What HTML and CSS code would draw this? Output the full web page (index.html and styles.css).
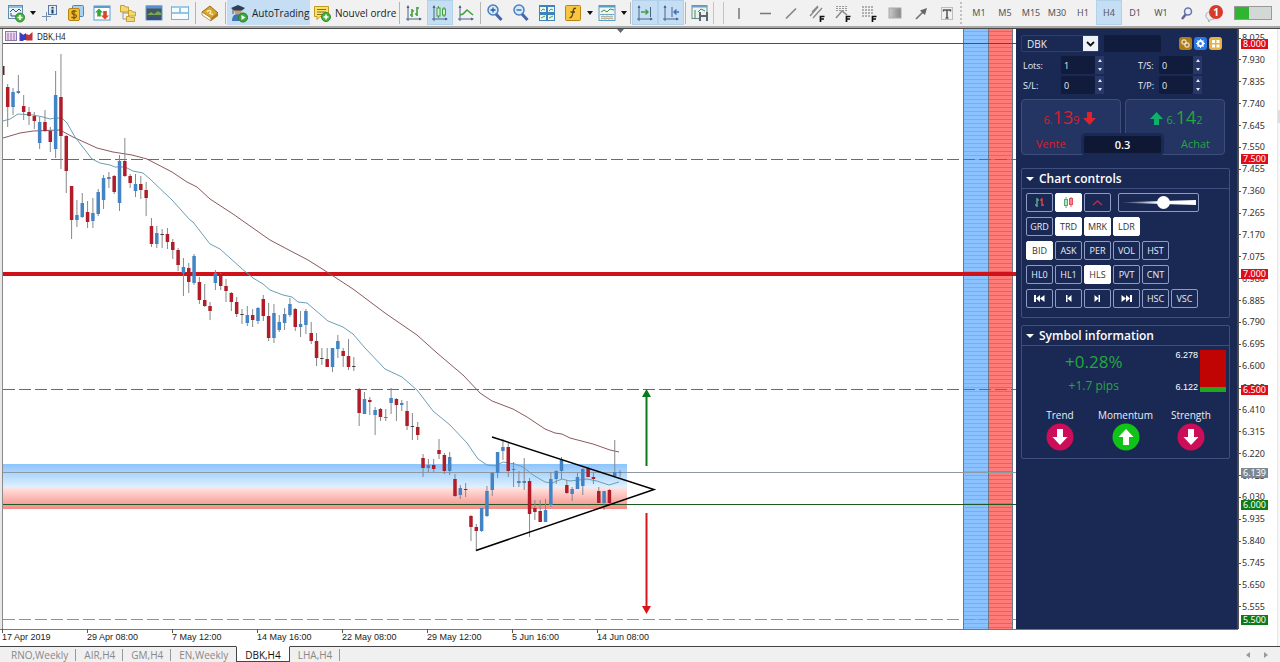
FILE: index.html
```html
<!DOCTYPE html>
<html lang="fr">
<head>
<meta charset="utf-8">
<title>DBK,H4</title>
<link rel="stylesheet" href="styles.css">
</head>
<body>
<div class="app">
<header class="toolbar">
  <button class="tool" aria-label="New chart"><svg width="20" height="20" viewBox="0 0 20 20"><rect x="2.5" y="2.5" width="14" height="13" fill="#e9f5fb" stroke="#5b8fb0"/><path d="M3 4h13" stroke="#8fc0dc" stroke-width="2"/><path d="M4 9l3-3 3 3 3-3 2 2M5 13v-3M5 13h6" stroke="#447" fill="none"/><circle cx="14" cy="14.500" r="4.500" fill="#4bb043" stroke="#2c8a2c"/><path d="M14 12v5M11.500 14.500h5" stroke="#fff" stroke-width="1.600"/></svg></button>
  <button class="caret" aria-label="New chart menu"></button>
  <button class="tool" aria-label="Market watch"><svg width="20" height="20" viewBox="0 0 20 20"><rect x="8.500" y="2.500" width="8" height="9" fill="#dfeaf5" stroke="#5a7ba5"/><path d="M12.500 4v1.500M12.500 6.500v4" stroke="#235" stroke-width="2"/><path d="M6.500 9v9M2 13.500h9" stroke="#7a8fa8"/></svg></button>
  <button class="tool" aria-label="Symbols"><svg width="20" height="20" viewBox="0 0 20 20"><rect x="6.500" y="2.500" width="11" height="11" rx="1" fill="#a8d2f2" stroke="#4a86bb"/><rect x="2.500" y="5.500" width="11" height="12" rx="1.500" fill="#f1bf35" stroke="#b98410"/><path d="M10.500 8.500c-2-1.500-5-.5-4.500 1.500s4.500 1 4.500 3-3 2.500-5 1M8 7v9.500" stroke="#7b5200" fill="none" stroke-width="1.200"/></svg></button>
  <button class="tool" aria-label="Data window"><svg width="20" height="20" viewBox="0 0 20 20"><rect x="2" y="3" width="16" height="14" fill="#fff" stroke="#5a9bd0"/><path d="M2 4h16" stroke="#5a9bd0" stroke-width="2"/><path d="M7 5.500l4 4H8.800v4H5.200v-4H3z" fill="#39a53a"/><path d="M13 16.500l-4-4h2.200V8h3.600v4.500H17z" fill="#e0432c"/></svg></button>
  <button class="tool" aria-label="Navigator"><svg width="20" height="20" viewBox="0 0 20 20"><path d="M5 8v8h6M5 10h6" stroke="#999" fill="none"/><path d="M2.500 2.500h4l1 1.500h3v5h-8zM10.500 7.500h3l1 1.500h3v4h-7zM8.500 13.500h3l1 1h4v4h-8z" fill="#f3d873" stroke="#c5a02c"/></svg></button>
  <button class="tool" aria-label="Terminal"><svg width="20" height="20" viewBox="0 0 20 20"><rect x="2" y="3" width="16" height="14" fill="#44565e" stroke="#6aa0cf"/><path d="M2 4h16" stroke="#5a93cc" stroke-width="3"/><path d="M3 12l4-3 3 2 4-3 3 2v2H3z" fill="#75a657"/><path d="M3 14h14v3H3z" fill="#384e8c"/></svg></button>
  <button class="tool" aria-label="Strategy tester"><svg width="20" height="20" viewBox="0 0 20 20"><rect x="1.500" y="3.500" width="17" height="13" fill="#f7fcff" stroke="#79b2d8"/><path d="M2 10h16M10 4v6" stroke="#79b2d8" stroke-width="1.500"/><path d="M2 4h16" stroke="#9acbea" stroke-width="2"/></svg></button>
  <span class="sep"></span>
  <button class="tool" aria-label="MetaEditor"><svg width="20" height="20" viewBox="0 0 20 20"><path d="M2 9l8-6 8 7-7 6z" fill="#d9a62b" stroke="#9a6d10"/><path d="M2 9l9 6v3l-9-6z" fill="#fff" stroke="#9a6d10" stroke-width=".7"/><path d="M11 15l7-5v3l-7 5z" fill="#b17d16"/><path d="M7 9c2-3 5-1 3 1.500l3 1" stroke="#f9eab0" stroke-width="1.500" fill="none"/></svg></button>
  <span class="sep"></span>
  <button class="wide on auto"><svg width="20" height="20" viewBox="0 0 20 20"><path d="M3 18c0-6 3-7 6-7s6 2 6 7z" fill="#4276b8"/><circle cx="9" cy="8" r="3.500" fill="#c79a70"/><path d="M2 5l7-3 7 3-3 2.500H5z" fill="#2e4056"/><path d="M4 6v5" stroke="#555"/><circle cx="14" cy="14.500" r="4.500" fill="#3fa83c" stroke="#267c25"/><path d="M12.500 12l4 2.500-4 2.500z" fill="#fff"/></svg>AutoTrading</button>
  <button class="wide order"><svg width="20" height="20" viewBox="0 0 20 20"><path d="M2.500 3.500h14v10H8l-3 3v-3H2.500z" fill="#f9e06a" stroke="#c29a20"/><path d="M5 6.500h9M5 9h9M5 11.500h6" stroke="#8a7320"/><circle cx="14" cy="14" r="4.500" fill="#4bb043" stroke="#2c8a2c"/><path d="M14 11.500v5M11.500 14h5" stroke="#fff" stroke-width="1.600"/></svg>Nouvel ordre</button>
  <span class="sep"></span>
  <button class="tool" aria-label="Bar chart"><svg width="20" height="20" viewBox="0 0 20 20"><path d="M4 3v15M2 16h15" stroke="#4a6390" fill="none"/><path d="M2.500 5L4 2l1.500 3zM15 14.500l3 1.500-3 1.500z" fill="#4a6390"/><path d="M8 6v8M6 12h2M8 8h2M13 4v9M11 11h2M13 5h2" stroke="#3fa23a" stroke-width="1.600"/></svg></button>
  <button class="tool on" aria-label="Candlesticks"><svg width="20" height="20" viewBox="0 0 20 20"><path d="M4 3v15M2 16h15" stroke="#4a6390" fill="none"/><path d="M2.500 5L4 2l1.500 3zM15 14.500l3 1.500-3 1.500z" fill="#4a6390"/><rect x="7" y="5" width="3" height="8" fill="#d7f0cf" stroke="#3fa23a"/><rect x="12.500" y="6" width="3" height="6" fill="#d7f0cf" stroke="#3fa23a"/><path d="M8.500 3v2M8.500 13v2M14 4v2M14 12v2" stroke="#3fa23a"/></svg></button>
  <button class="tool" aria-label="Line chart"><svg width="20" height="20" viewBox="0 0 20 20"><path d="M4 3v15M2 16h15" stroke="#4a6390" fill="none"/><path d="M2.500 5L4 2l1.500 3zM15 14.500l3 1.500-3 1.500z" fill="#4a6390"/><path d="M4 12l3-1 4-4 6 5" stroke="#3fa23a" stroke-width="1.600" fill="none"/></svg></button>
  <span class="sep thin"></span>
  <button class="tool" aria-label="Zoom in"><svg width="20" height="20" viewBox="0 0 20 20"><path d="M10.500 10.500l6 6.500" stroke="#4566a8" stroke-width="3"/><circle cx="8" cy="7" r="5" fill="#d6eafa" stroke="#4a7fc0" stroke-width="1.500"/><path d="M8 4.500v5M5.500 7h5" stroke="#2a5a9c" stroke-width="1.300"/></svg></button>
  <button class="tool" aria-label="Zoom out"><svg width="20" height="20" viewBox="0 0 20 20"><path d="M10.500 10.500l6 6.500" stroke="#4566a8" stroke-width="3"/><circle cx="8" cy="7" r="5" fill="#d6eafa" stroke="#4a7fc0" stroke-width="1.500"/><path d="M5.500 7h5" stroke="#2a5a9c" stroke-width="1.300"/></svg></button>
  <button class="tool" aria-label="Tile windows"><svg width="20" height="20" viewBox="0 0 20 20"><rect x="2" y="2" width="16" height="16" fill="#3d83bd"/><path d="M3 4h6v5H3zM11 4h6v5h-6zM3 12h6v5H3zM11 12h6v5h-6z" fill="#eef8e8"/><path d="M4 8l2-2 2 1M12 8l2-2 2 1M4 15l2-1 2-1M12 15l2-1 2-1" stroke="#4c9e43" fill="none"/></svg></button>
  <button class="tool" aria-label="Indicators"><svg width="20" height="20" viewBox="0 0 20 20"><rect x="2.500" y="2.500" width="15" height="15" rx="1" fill="#f8c540" stroke="#bb8510"/><path d="M13 5.500c-2.500-1-2.500 1-3 4S8.500 15 6.500 14.500M7.500 9h4.500" stroke="#5d4208" stroke-width="1.300" fill="none"/></svg></button>
  <button class="caret" aria-label="Indicators menu"></button>
  <button class="tool" aria-label="Templates"><svg width="20" height="20" viewBox="0 0 20 20"><rect x="2" y="2.500" width="16" height="15" fill="#eef6f8" stroke="#5c9dc8"/><path d="M2 3.500h16" stroke="#5c9dc8" stroke-width="2"/><path d="M4 9l3-2 3 2 3-3 4 1" stroke="#3d963a" fill="none"/><path d="M3 11.500h14" stroke="#78a4bc"/><path d="M4 14l2-1 2 1 2-1 2 1 2-1 2 1M4 16l2-1 2 1 2-1 2 1 2-1 2 1" stroke="#a39c80" fill="none"/></svg></button>
  <button class="caret" aria-label="Templates menu"></button>
  <span class="sep"></span>
  <button class="tool on" aria-label="Auto scroll"><svg width="20" height="20" viewBox="0 0 20 20"><path d="M4 3v15M2 16h15M15.500 4v10" stroke="#4a6390" fill="none"/><path d="M2.500 5L4 2l1.500 3zM15 14.500l3 1.500-3 1.500z" fill="#4a6390"/><path d="M6 9h7M10.500 6.500L13 9l-2.500 2.500" stroke="#3fa23a" stroke-width="1.400" fill="none"/></svg></button>
  <button class="tool on" aria-label="Chart shift"><svg width="20" height="20" viewBox="0 0 20 20"><path d="M4 3v15M2 16h15M11 4v10" stroke="#4a6390" fill="none"/><path d="M2.500 5L4 2l1.500 3zM15 14.500l3 1.500-3 1.500z" fill="#4a6390"/><path d="M13 9h5M15.500 6.500L13 9l2.500 2.500" stroke="#3e6fb8" stroke-width="1.400" fill="none"/></svg></button>
  <span class="sep thin"></span>
  <button class="tool" aria-label="Save picture"><svg width="20" height="20" viewBox="0 0 20 20"><rect x="2" y="2.500" width="15" height="13" fill="#eaf3f3" stroke="#71869a"/><path d="M2 3.500h15" stroke="#71a0c4" stroke-width="2"/><path d="M5 7v9M8 9l3-3 4 2" stroke="#3d963a" fill="none"/><path d="M9 9h9v9H9z" fill="#5c666e"/><path d="M11 9h5v3h-5zM11 14h5v4h-5z" fill="#eee"/></svg></button>
  <span class="sep double"></span>
  <button class="tool" aria-label="Vertical line"><svg width="20" height="20" viewBox="0 0 20 20"><path d="M10 5v11" stroke="#777" stroke-width="1.500"/></svg></button>
  <button class="tool" aria-label="Horizontal line"><svg width="20" height="20" viewBox="0 0 20 20"><path d="M5 10.500h11" stroke="#777" stroke-width="1.500"/></svg></button>
  <button class="tool" aria-label="Trend line"><svg width="20" height="20" viewBox="0 0 20 20"><path d="M5 15.500L15 5.500" stroke="#888" stroke-width="1.700"/></svg></button>
  <button class="tool" aria-label="Channel"><svg width="20" height="20" viewBox="0 0 20 20"><path d="M3 13l8-9M6 15L15 5M5 9l6-6" stroke="#888" stroke-width="1.300"/><path d="M13.500 19v-5.500h4M13.500 16h3.500" stroke="#111" stroke-width="1.700" fill="none"/></svg></button>
  <button class="tool" aria-label="Fibonacci fan"><svg width="20" height="20" viewBox="0 0 20 20"><path d="M3 3.500h12M3 5.500h12M3 7.500h12" stroke="#999" stroke-dasharray="2 1"/><path d="M3 15l6-7 5 4" stroke="#888" stroke-width="1.500" fill="none"/><path d="M13.500 19v-5.500h4M13.500 16h3.500" stroke="#111" stroke-width="1.700" fill="none"/></svg></button>
  <button class="tool" aria-label="Fibonacci retracement"><svg width="20" height="20" viewBox="0 0 20 20"><path d="M3 4h12M3 7h12M3 10h12M3 13h8" stroke="#999" stroke-width="1.500" stroke-dasharray="2 1"/><path d="M13.500 19v-5.500h4M13.500 16h3.500" stroke="#111" stroke-width="1.700" fill="none"/></svg></button>
  <button class="tool" aria-label="Shapes"><svg width="20" height="20" viewBox="0 0 20 20"><defs><linearGradient id="gs"><stop offset="0" stop-color="#ccc"/><stop offset="1" stop-color="#858585"/></linearGradient></defs><rect x="4" y="5" width="12" height="10" fill="url(#gs)" stroke="#aaa"/></svg></button>
  <button class="tool" aria-label="Arrow"><svg width="20" height="20" viewBox="0 0 20 20"><path d="M5 16l7-7" stroke="#777" stroke-width="1.700"/><path d="M16 5l-2 7-2.500-2L9 7.500z" fill="#666"/></svg></button>
  <button class="tool" aria-label="Text label"><svg width="20" height="20" viewBox="0 0 20 20"><rect x="4.500" y="4.500" width="11" height="12" fill="none" stroke="#888" stroke-dasharray="1 1"/><path d="M6.500 8.500V7h7v1.500M10 7v8M8.500 15h3" stroke="#555" stroke-width="1.500" fill="none"/></svg></button>
  <span class="sep dotted"></span>
  <button class="tool">M1</button>
  <button class="tool">M5</button>
  <button class="tool">M15</button>
  <button class="tool">M30</button>
  <button class="tool">H1</button>
  <button class="tool on">H4</button>
  <button class="tool">D1</button>
  <button class="tool">W1</button>
  <button class="tool" aria-label="Search"><svg width="20" height="20" viewBox="0 0 20 20"><path d="M9 11l-4 5" stroke="#5b6796" stroke-width="2.500"/><circle cx="11" cy="8.500" r="3.500" fill="#eef" stroke="#6874a8" stroke-width="1.500"/></svg></button>
  <button class="bell" aria-label="Notifications"><svg width="20" height="20" viewBox="0 0 20 20"><path d="M3 12c0-3 4-4 8-3v7c-3 1-4 0-5 3l-1-3c-2-1-2-2-2-4z" fill="#eee" stroke="#aaa"/></svg><span class="count">1</span></button>
  <span class="meter"></span>
</header>

<main class="workspace">
  <svg class="plot" id="plot">
    <defs>
      <linearGradient id="demand" x2="0" y2="1"><stop offset="0" stop-color="#8cc4fd"/><stop offset=".5" stop-color="#dcefff"/><stop offset=".53" stop-color="#ffe3e1"/><stop offset="1" stop-color="#f78a84"/></linearGradient>
      <pattern id="bidfill" width="8" height="4" patternUnits="userSpaceOnUse"><path d="M0 0h8v4H0z" fill="#8ac3ff"/><path d="M0 3h8v1H0z" fill="#72b0f4"/></pattern>
      <pattern id="askfill" width="8" height="4" patternUnits="userSpaceOnUse"><path d="M0 0h8v4H0z" fill="#ff7b78"/><path d="M0 3h8v1H0z" fill="#e8605f"/></pattern>
    </defs>
    <g transform="translate(0 -29)">
      <rect x="3" y="464" width="624" height="45" fill="url(#demand)"/>
      <svg x="100%" overflow="visible">
        <rect x="-52" y="29" width="25" height="2000" fill="url(#bidfill)"/>
        <rect x="-28" y="29" width="25" height="2000" fill="url(#askfill)"/>
        <path d="M-52.500 29v2000M-27.500 29v2000M-3.500 29v2000" stroke="#6f7786"/>
      </svg>
      <line class="level alert" x1="3" x2="100%" y1="43.500" y2="43.500"/>
      <line class="level dash" x1="3" x2="100%" y1="159.500" y2="159.500"/>
      <line class="level major" x1="3" x2="100%" y1="274" y2="274"/>
      <line class="level dash" x1="3" x2="100%" y1="389.500" y2="389.500"/>
      <line class="level bid" x1="3" x2="100%" y1="472.500" y2="472.500"/>
      <line class="level target" x1="3" x2="100%" y1="504.500" y2="504.500"/>
      <line class="level dash low" x1="3" x2="100%" y1="619.500" y2="619.500"/>
      <polyline class="ma slow" points="3,138 20,133 33,131 60,130 73,137 97,148 113,152 132,155 147,159 172,172 187,182 197,187 210,199 233,214 260,233 270,240 287,249 308,260 327,272 353,289 385,313 417,335 437,353 463,375 480,393 492,401 513,409 527,417 545,429 555,433 562,434 570,438 593,444 610,450 619,452"/>
      <polyline class="ma fast" points="3,121 10,119 18,114 33,115 43,117 50,119 55,118 62,118 67,123 75,137 92,159 100,163 110,165 115,167 125,167 133,171 143,173 150,179 172,200 190,220 193,222 210,244 220,249 240,267 253,278 263,284 270,290 283,295 292,297 298,302 307,303 328,321 343,327 353,334 365,348 385,369 402,377 417,390 433,411 450,425 467,443 478,459 487,465 495,466 503,462 515,464 523,467 533,475 545,482 552,483 562,479 570,481 587,479 597,481 609,485 619,482"/>
      <path d="M3.500 66v9" stroke="#6b1a22" stroke-width="2"/>
      <g id="candles"></g>
      <path class="wedge" d="M492 437L654 489.500L476 550.500"/>
      <path d="M646.500 466V396" stroke="#0b7a1a" stroke-width="2"/><path d="M642 397h9l-4.500-8z" fill="#0b7a1a"/>
      <path d="M646.500 513v96" stroke="#d8141c" stroke-width="2"/><path d="M642 606h9l-4.500 8z" fill="#d8141c"/>
      <path d="M617 29h7l-3.500 4z" fill="#667"/>
      <rect x="5.500" y="31.500" width="11" height="9" fill="#e4d8f2" stroke="#8a78b0"/><path d="M8 33v7M11 33v7M14 33v7" stroke="#b06a9a"/>
      <path d="M19.500 32l4 3v6h-4zM23 35l3-2v7h-3z" fill="#3a3ec0"/><path d="M26 34l3 1 3.500-3v8.500h-6.500z" fill="#c0353b"/>
      <text class="title" x="37" y="40">DBK,H4</text>
      <path d="M2.500 29v2000" stroke="#8a8a8a"/><path d="M0 29h2v2000h-2z" fill="#e8e8e8"/>
    </g>
  </svg>

  <aside class="panel">
    <div class="row symbol">
      <span class="pick"><select aria-label="Symbol"><option>DBK</option></select><svg width="15" height="15" viewBox="0 0 15 15"><path d="M0 0h15v15H0z" fill="#eef1f8"/><path d="M4 6l3.500 3.500L11 6" fill="none" stroke="#111" stroke-width="1.800"/></svg></span>
      <input class="search" type="text" aria-label="Filter">
      <button class="mini brown" aria-label="Link"><svg width="13" height="13" viewBox="0 0 13 13"><rect x="3" y="3" width="4" height="4" rx="1" fill="none" stroke="#fff"/><rect x="6" y="6" width="4" height="4" rx="1" fill="none" stroke="#fff"/></svg></button>
      <button class="mini blue" aria-label="Settings"><svg width="13" height="13" viewBox="0 0 13 13"><circle cx="6.500" cy="6.500" r="2.500" fill="none" stroke="#fff" stroke-width="2"/><path d="M6.500 2v9M2 6.500h9M3.500 3.500l6 6M9.500 3.500l-6 6" stroke="#fff"/><circle cx="6.500" cy="6.500" r="1.500" fill="#2f78df"/></svg></button>
      <button class="mini gold" aria-label="Layout"><svg width="13" height="13" viewBox="0 0 13 13"><path d="M3 3h3v3H3zM7.500 3h3v3h-3zM3 7.500h3v3H3zM7.500 7.500h3v3h-3z" fill="#fff"/></svg></button>
    </div>
    <div class="params">
      <label for="lots">Lots:</label><span class="spin"><input id="lots" type="text" value="1"><span class="steps"><button aria-label="Lots up"></button><button class="down" aria-label="Lots down"></button></span></span>
      <label for="ts">T/S:</label><span class="spin"><input id="ts" type="text" value="0"><span class="steps"><button aria-label="T/S up"></button><button class="down" aria-label="T/S down"></button></span></span>
      <label for="sl">S/L:</label><span class="spin"><input id="sl" type="text" value="0"><span class="steps"><button aria-label="S/L up"></button><button class="down" aria-label="S/L down"></button></span></span>
      <label for="tp">T/P:</label><span class="spin"><input id="tp" type="text" value="0"><span class="steps"><button aria-label="T/P up"></button><button class="down" aria-label="T/P down"></button></span></span>
    </div>
    <div class="deal">
      <button class="side sell"><span class="quote">6.<b>13</b>9<svg width="13" height="14" viewBox="0 0 13 14"><path d="M4 0h5v6h4L6.500 13 0 6h4z" fill="#e0222c"/></svg></span><span class="verb">Vente</span></button>
      <button class="side buy"><span class="quote"><svg width="13" height="14" viewBox="0 0 13 14"><path d="M4 13h5V7h4L6.500 0 0 7h4z" fill="#0fb06a"/></svg>6.<b>14</b>2</span><span class="verb">Achat</span></button>
      <input class="spread" type="text" value="0.3" aria-label="Spread">
    </div>
    <details class="box controls" open>
      <summary>Chart controls</summary>
      <div class="keys">
        <div class="keyrow">
          <button class="key" aria-label="Bars"><svg width="13" height="11" viewBox="0 0 13 11"><path d="M4 1v9M2 8h2M4 3h2" stroke="#5aa88c" stroke-width="1.500"/><path d="M9 1v8M7 3h2M9 8h2" stroke="#d0424c" stroke-width="1.500"/></svg></button>
          <button class="key on" aria-label="Candles"><svg width="13" height="11" viewBox="0 0 13 11"><path d="M4 0v11" stroke="#5aa874"/><path d="M9 0v10" stroke="#e0505a"/><rect x="2.500" y="2.500" width="3" height="6" fill="#b9e0c2" stroke="#5aa874"/><rect x="7.500" y="1.500" width="3" height="6" fill="#f08a90" stroke="#e0505a"/></svg></button>
          <button class="key" aria-label="Line"><svg width="13" height="11" viewBox="0 0 13 11"><path d="M2 8l4.500-4L11 8" fill="none" stroke="#b52c48" stroke-width="1.600"/></svg></button>
          <span class="slide"><input type="range" min="0" max="100" value="58" aria-label="Zoom"></span>
        </div>
        <div class="keyrow"><button class="key">GRD</button><button class="key on">TRD</button><button class="key on">MRK</button><button class="key on">LDR</button></div>
        <div class="keyrow"><button class="key on">BID</button><button class="key">ASK</button><button class="key">PER</button><button class="key">VOL</button><button class="key">HST</button></div>
        <div class="keyrow"><button class="key">HL0</button><button class="key">HL1</button><button class="key on">HLS</button><button class="key">PVT</button><button class="key">CNT</button></div>
        <div class="keyrow">
          <button class="key" aria-label="First"><svg width="11" height="9" viewBox="0 0 11 9"><path d="M0 1h2v7H0zM6 1v7L2 4.500zM10.500 1v7L6 4.500z" fill="#fff"/></svg></button>
          <button class="key" aria-label="Previous"><svg width="11" height="9" viewBox="0 0 11 9"><path d="M3 1h1.500v7H3zM8.500 1v7l-4-3.500z" fill="#fff"/></svg></button>
          <button class="key" aria-label="Next"><svg width="11" height="9" viewBox="0 0 11 9"><path d="M8 1H6.500v7H8zM2.500 1v7l4-3.500z" fill="#fff"/></svg></button>
          <button class="key" aria-label="Last"><svg width="11" height="9" viewBox="0 0 11 9"><path d="M11 1H9v7h2zM5 1v7l4-3.500zM.5 1v7L5 4.500z" fill="#fff"/></svg></button>
          <button class="key">HSC</button><button class="key">VSC</button>
        </div>
      </div>
    </details>
    <details class="box info" open>
      <summary>Symbol information</summary>
      <div class="stats">
        <div class="change"><span class="percent">+0.28%</span><span class="pips">+1.7 pips</span></div>
        <div class="range"><span>6.278</span><span>6.122</span></div>
        <div class="gauge"></div>
      </div>
      <div class="signals">
        <div>Trend<svg width="28" height="28" viewBox="0 0 28 28"><circle cx="14" cy="14" r="13.500" fill="#cc0d57"/><path d="M11 6h6v8h4.500L14 22l-7.500-8H11z" fill="#fff"/></svg></div>
        <div>Momentum<svg width="28" height="28" viewBox="0 0 28 28"><circle cx="14" cy="14" r="13.500" fill="#10c316"/><path d="M11 22h6v-8h4.500L14 6l-7.500 8H11z" fill="#fff"/></svg></div>
        <div>Strength<svg width="28" height="28" viewBox="0 0 28 28"><circle cx="14" cy="14" r="13.500" fill="#cc0d57"/><path d="M11 6h6v8h4.500L14 22l-7.500-8H11z" fill="#fff"/></svg></div>
      </div>
    </details>
  </aside>

  <div class="scale"><ul id="scale"></ul></div>
  <div class="times"><span>17 Apr 2019</span><span>29 Apr 08:00</span><span>7 May 12:00</span><span>14 May 16:00</span><span>22 May 08:00</span><span>29 May 12:00</span><span>5 Jun 16:00</span><span>14 Jun 08:00</span></div>
  <div class="edge"></div>
</main>

<nav class="tabs">
  <button class="tab">RNO,Weekly</button><button class="tab">AIR,H4</button><button class="tab">GM,H4</button><button class="tab last">EN,Weekly</button><button class="tab current">DBK,H4</button><button class="tab">LHA,H4</button>
  <span class="arrows"><button class="arrow back" aria-label="Scroll left"></button><button class="arrow" aria-label="Scroll right"></button></span>
</nav>
</div>
<script src="chart.js"></script>
</body>
</html>
```

FILE: styles.css
```css
* { box-sizing: border-box; }
body { margin: 0; font-family: "Open Sans", "Noto Sans", sans-serif; font-size: 10px; color: #333; }
button, input, select { font: inherit; color: inherit; margin: 0; padding: 0; border: 0; background: none; }
svg { display: block; flex: none; }
.app { display: flex; flex-direction: column; min-height: 100vh; background: #f0f0f0; }

.toolbar { display: flex; align-items: stretch; height: 28px; padding-left: 3px; background: #f1f1f1; border-bottom: 2px solid #a9a9a9; }
.toolbar > * { flex: none; }
.tool { width: 26px; height: 25px; display: flex; align-items: center; justify-content: center; font-family: "Noto Sans", sans-serif; font-size: 9px; color: #555; }
.on { background: #c5def3; }
.tool.on { border: 1px solid #b2d2ec; }
.caret { width: 8px; height: 25px; display: flex; align-items: center; justify-content: center; }
.caret::before { content: ""; border: 3px solid transparent; border-top: 4px solid #111; border-bottom: 0; }
.sep { width: 4px; height: 22px; margin-top: 2px; background: linear-gradient(#b5b5b5, #b5b5b5) center / 1px 100% no-repeat; }
.sep.thin { width: 3px; }
.sep.double { width: 11px; border-right: 1px solid #c4c4c4; border-left: 1px solid #c4c4c4; background: none; margin-right: 2px; }
.sep.dotted { width: 6px; background: none; border-left: 2px dotted #c0c0c0; }
.wide { display: flex; align-items: center; gap: 3px; height: 25px; font-size: 10px; color: #222; padding-left: 2px; white-space: nowrap; }
.auto { width: 83px; }
.order { width: 87px; }
.bell { position: relative; width: 30px; height: 25px; padding-left: 3px; }
.count { position: absolute; left: 9px; top: 5px; width: 14px; height: 14px; border-radius: 7px; background: #d93a2c; color: #fff; font-weight: 700; line-height: 14px; text-align: center; }
.meter { width: 38px; height: 14px; margin: 6px 0 0 4px; border: 1px solid #999; background: linear-gradient(90deg, #2fb52f 14px, #d4d8d4 14px); }

.workspace { flex: 1; display: grid; grid-template: minmax(600px, 1fr) 17px / minmax(0, 1fr) 222px 39px 3px; border-top: 1px solid #4a4a4a; background: #fff; }
.plot { width: 100%; height: 100%; }
.level { stroke-width: 1; }
.alert { stroke: #b8202c; }
.major { stroke: #cf1119; stroke-width: 4; }
.dash { stroke: #a85257; stroke-dasharray: 12 4; }
.low { stroke: #7f9f82; }
.bid { stroke: #8d99a6; }
.target { stroke: #1d5a22; }
.ma { fill: none; stroke-width: 1; }
.slow { stroke: #8b5a5c; }
.fast { stroke: #6c9fb4; }
.wick { stroke: #85888c; stroke-width: 1; }
.up { fill: #4284c4; }
.fall { fill: #b01c28; }
.doji { fill: #444; }
.wedge { fill: none; stroke: #000; stroke-width: 1.5; }
.title { font-family: "Noto Sans", sans-serif; font-size: 8px; fill: #222; }

.panel { background: #1a2954; color: #e8edf8; padding: 6px 7px 0 5px; border-right: 1px solid #39446a; }
.row { display: flex; align-items: center; }
.symbol { height: 17px; }
.pick { position: relative; width: 78px; height: 17px; margin-right: 5px; border: 1px solid #2f3f6d; border-radius: 2px; }
.pick select { width: 100%; height: 15px; padding-left: 5px; appearance: none; font-size: 10px; }
.pick svg { position: absolute; right: 0; top: 0; pointer-events: none; }
.search { width: 57px; height: 17px; margin-right: 18px; background: #111b3b; border-radius: 2px; }
.mini { width: 13px; height: 13px; margin-right: 2px; border-radius: 3px; }
.brown { background: #ad7d1c; }
.blue { background: #2f78df; }
.gold { background: #e8b23e; }
.params { display: grid; grid-template-columns: 38px 77px 21px 1fr; row-gap: 2px; padding: 4px 0 0 2px; align-items: center; font-size: 9px; }
.spin { display: flex; width: 43px; height: 18px; }
.spin input { width: 34px; background: #111b3b; padding-left: 3px; border-radius: 2px; }
.steps { display: flex; flex-direction: column; width: 9px; background: #263768; }
.steps button { flex: 1; display: flex; align-items: center; justify-content: center; }
.steps button::before { content: ""; border: 2px solid transparent; border-bottom: 3px solid #dfe6f5; border-top: 0; }
.steps .down::before { border-top: 3px solid #dfe6f5; border-bottom: 0; }
.deal { position: relative; display: flex; gap: 4px; margin-top: 5px; }
.side { display: flex; flex-direction: column; width: 100px; height: 56px; padding: 3px 14px 0; background: #243463; border: 1px solid #3d4d7c; border-radius: 4px; }
.quote { display: flex; align-items: baseline; justify-content: center; height: 32px; line-height: 28px; font-size: 11px; }
.quote b { font-weight: 400; font-size: 18px; }
.quote svg { margin: 0 3px; align-self: center; }
.verb { font-size: 11px; line-height: 18px; }
.sell { color: #d8222c; align-items: flex-start; }
.buy { color: #22a83e; align-items: flex-end; }
.sell .quote, .buy .quote { align-self: center; }
.spread { position: absolute; left: 60px; top: 34px; width: 83px; height: 23px; border: 3px solid #1a2954; border-radius: 5px; background: #0e1733; color: #fff; font-size: 11px; font-weight: 600; text-align: center; }
.box { border: 1px solid #3f4f80; border-radius: 2px; }
.controls { margin-top: 13px; height: 150px; }
.info { margin-top: 7px; height: 134px; }
.box summary { display: flex; align-items: center; gap: 5px; height: 20px; padding-left: 4px; border-bottom: 1px solid #3f4f80; font-size: 12px; font-weight: 600; color: #fff; list-style: none; }
.box summary::before { content: ""; border: 4px solid transparent; border-top: 4px solid #fff; border-bottom: 0; }
.keys { display: flex; flex-direction: column; gap: 5px; padding: 4px 0 0 4px; }
.keyrow { display: flex; gap: 2px; }
.key { width: 27px; height: 19px; display: flex; align-items: center; justify-content: center; border: 1px solid #8e9bc4; border-radius: 2px; font-size: 9px; }
.key.on { background: #fff; border-color: #fff; color: #333; }
.slide { position: relative; width: 81px; height: 19px; margin-left: 5px; padding: 0 2px; border: 1px solid #8e9bc4; border-radius: 2px; display: flex; align-items: center; }
.slide::before { content: ""; position: absolute; inset: 6px 2px; background: linear-gradient(90deg, transparent, #fff 50%); clip-path: polygon(0 45%, 100% 0, 100% 100%, 0 55%); }
.slide input { position: relative; width: 100%; height: 15px; appearance: none; }
.slide input::-webkit-slider-thumb { appearance: none; width: 13px; height: 13px; border-radius: 7px; background: #fff; }
.stats { display: flex; padding: 4px 3px 0 0; }
.change { flex: 1; display: flex; flex-direction: column; align-items: center; padding-right: 10px; color: #22a83e; }
.percent { font-size: 17px; line-height: 24px; }
.pips { font-size: 12px; line-height: 24px; }
.range { display: flex; flex-direction: column; justify-content: space-between; height: 42px; margin-right: 2px; font: 9px "Liberation Sans", sans-serif; color: #fff; }
.gauge { width: 26px; height: 42px; background: linear-gradient(#c00303 37px, #1fa81f 37px); }
.signals { display: grid; grid-template-columns: 64px 1fr 64px; padding: 10px 6px 0; font-size: 10px; line-height: 14px; }
.signals div { display: flex; flex-direction: column; align-items: center; gap: 1px; }

.scale { position: relative; border-left: 1px solid #555; padding: 3px 0 16px; font-family: "Noto Sans", sans-serif; font-size: 9px; }
.scale ul { display: flex; flex-direction: column; justify-content: space-between; height: 100%; margin: 0; padding: 0; list-style: none; }
.scale li { display: flex; align-items: center; gap: 1px; line-height: 12px; }
.scale li::before { content: ""; width: 2px; height: 1px; background: #555; }
.tag { position: absolute; left: 2px; width: 27px; height: 10px; padding-left: 2px; line-height: 10px; color: #fff; }
.tag.red { background: #e00d18; }
.tag.green { background: #0f7a16; }
.tag.grey { background: #7b8894; }
.times { grid-column: 1 / 4; grid-row: 2; display: flex; padding-left: 2px; background: linear-gradient(#777, #777) 0 0 / calc(100% - 39px) 1px no-repeat; font-family: "Liberation Sans", sans-serif; font-size: 9px; line-height: 16px; color: #222; }
.times span { width: 85px; flex: none; background: linear-gradient(#555, #555) 0 0 / 1px 4px no-repeat; }
.edge { grid-column: 4; grid-row: 1 / 3; background: linear-gradient(#ddd, #ddd) 0 81px / 3px 13px no-repeat, #f8f8f8; border-left: 1px solid #e6e6e6; }

.tabs { display: flex; height: 16px; border-top: 1px solid #444; background: #f0f0f0; }
.tab { height: 15px; padding: 0 8px; line-height: 16px; color: #888; position: relative; }
.tab:first-child { padding-left: 11px; }
.tab::after { content: ""; position: absolute; right: 0; top: 2px; height: 12px; border-right: 1px solid #999; }
.tab.last::after { border: 0; }
.tab.current { margin-top: -1px; height: 16px; background: #fff; color: #111; border: 1px solid #444; border-top-color: #fff; }
.tab.current::after { border: 0; }
.arrows { display: flex; align-items: center; gap: 14px; margin-left: auto; padding-right: 12px; }
.arrow { border: 3px solid transparent; border-left: 4px solid #999; border-right: 0; }
.arrow.back { border-left: 0; border-right: 4px solid #999; }
```

FILE: chart.js
```js
// Each candle: kind, high, body top, body bottom, low (vertical chart units).
const candles = `
r 84 87 107 127|b 88 92 107 115|b 75 91 93 94|r 95 106 112 120|r 107 112 116 125|r 112 116 121 129|b 117 122 143 149|r 110 122 131 132
r 127 131 142 152|b 71 95 149 158|r 54 97 136 169|r 135 136 171 193|r 186 186 220 239|b 200 215 220 227|b 193 203 217 218|r 201 212 222 228
b 198 213 221 228|b 189 192 214 216|b 175 178 200 209|b 172 177 179 188|r 175 176 192 194|b 155 161 203 211|r 138 161 176 177|r 174 176 183 188
b 174 184 191 197|r 176 184 190 199|r 182 190 198 216|r 218 226 244 247|b 226 233 244 248|k 229 234 235 248|r 228 234 242 249|r 239 242 250 259
r 248 250 265 271|b 258 267 273 296|r 263 268 282 293|b 254 256 283 285|r 277 282 300 304|r 284 300 306 307|r 302 306 311 320|b 270 273 283 290
r 273 274 286 290|r 279 286 291 302|r 292 293 302 311|r 297 302 314 317|k 309 314 315 324|b 306 315 323 326|r 309 315 320 327|b 307 308 321 324
r 295 299 316 321|r 303 316 338 341|b 304 313 338 343|b 315 322 330 332|b 308 314 323 330|b 298 304 315 317|r 308 309 327 331|b 311 324 327 337
b 309 311 325 334|r 322 333 341 344|r 333 341 358 366|k 348 358 359 365|r 348 359 367 367|b 348 348 367 372|b 335 341 349 358|r 348 351 356 367
r 339 356 367 370|k 357 366 367 371|r 388 389 413 426|b 392 399 414 414|r 397 400 402 415|b 407 410 415 435|r 408 409 417 421|b 409 417 418 421
b 388 398 403 414|r 398 399 405 421|b 400 403 405 411|r 401 411 426 430|k 413 426 427 440|r 422 427 435 440|r 454 458 468 477|b 459 465 468 472
r 459 465 469 472|r 439 450 454 459|r 453 455 471 474|b 452 457 471 475|r 474 479 496 497|b 485 488 495 499|k 483 489 490 497|r 515 516 527 541
r 524 527 531 551|b 508 508 531 532|b 486 491 516 517|b 472 473 490 496|b 452 452 473 478|b 439 447 451 460|r 443 447 471 477|b 462 469 470 487
b 471 481 483 487|b 458 481 483 490|r 478 481 514 537|r 500 508 512 520|r 500 511 522 522|b 499 510 522 522|b 472 479 505 507|b 470 471 479 484
b 457 460 471 479|r 480 485 493 494|b 487 489 494 501|b 473 477 489 489|b 468 469 486 495|r 467 468 477 477|r 472 477 479 484|r 487 491 503 503
b 491 491 503 510|r 489 490 503 504|b 440 472 476 477|b 470 472 473 477`.trim().split(/[|\n]/);

const STEP = 5.325;
const kinds = { r: "fall", b: "up", k: "doji" };
document.getElementById("candles").innerHTML = candles.map((row, i) => {
  const [kind, high, top, bottom, low] = row.split(" ");
  const x = 7.7 + i * STEP;
  return `<line class="wick" x1="${x}" x2="${x}" y1="${high}" y2="${low}"/>` +
    `<rect class="${kinds[kind]}" x="${x - 1.75}" y="${top}" width="3.500" height="${bottom - top}"/>`;
}).join("");

// Price scale: one label every 0.095, plus the highlighted levels.
const list = document.getElementById("scale");
for (let n = 0; n < 27; n++) {
  const item = document.createElement("li");
  item.textContent = (8.025 - n * 0.095).toFixed(3);
  list.append(item);
}
const PIXELS_PER_UNIT = 230.4;
[[8, "red"], [7.5, "red"], [7, "red"], [6.5, "red"], [6.139, "grey"], [6, "green"], [5.5, "green"]].forEach(([price, tone]) => {
  const tag = document.createElement("span");
  tag.className = "tag " + tone;
  tag.textContent = price.toFixed(3);
  tag.style.top = Math.round((8 - price) * PIXELS_PER_UNIT + 10) + "px";
  list.parentElement.append(tag);
});
```
